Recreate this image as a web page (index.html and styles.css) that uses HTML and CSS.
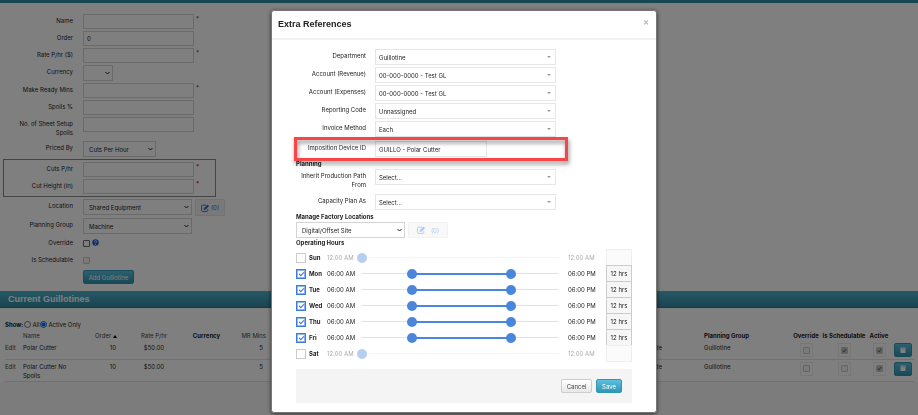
FILE: index.html
```
<!DOCTYPE html>
<html lang="en">

<head>
    <meta charset="UTF-8">
    <meta name="viewport" content="width=device-width, initial-scale=1.0">
    <title>Guillotines</title>
    <link rel="stylesheet" href="styles.css">
</head>

<body>
    <div class="page">
        <div class="topbar"></div>
        <form class="machine">
            <div class="row">
                <label for="name">Name</label>
                <input type="text" id="name"><span class="req">*</span>
            </div>
            <div class="row">
                <label for="order">Order</label>
                <input type="text" id="order" value="0">
            </div>
            <div class="row">
                <label for="rate">Rate P/hr ($)</label>
                <input type="text" id="rate"><span class="req">*</span>
            </div>
            <div class="row">
                <label for="currency">Currency</label>
                <select id="currency" class="w-xs"><option></option></select>
            </div>
            <div class="row">
                <label for="ready">Make Ready Mins</label>
                <input type="text" id="ready"><span class="req">*</span>
            </div>
            <div class="row">
                <label for="spoils">Spoils %</label>
                <input type="text" id="spoils">
            </div>
            <div class="row tall">
                <label for="setup">No. of Sheet Setup Spoils</label>
                <input type="text" id="setup">
            </div>
            <div class="row">
                <label for="priced">Priced By</label>
                <select id="priced" class="w-sm"><option>Cuts Per Hour</option></select>
            </div>
            <div class="cuts">
                <div class="row">
                    <label for="cuts">Cuts P/hr</label>
                    <input type="text" id="cuts"><span class="req red">*</span>
                </div>
                <div class="row">
                    <label for="height">Cut Height (in)</label>
                    <input type="text" id="height"><span class="req red">*</span>
                </div>
            </div>
            <div class="row">
                <label for="location">Location</label>
                <select id="location" class="w-md"><option>Shared Equipment</option></select>
                <button type="button" class="edit">
                    <svg viewBox="0 0 16 14"><path d="M12 8.5v3a1.5 1.5 0 0 1-1.500 1.500h-8A1.500 1.500 0 0 1 1 11.500v-8A1.500 1.500 0 0 1 2.500 2H9" fill="none" stroke="currentColor" stroke-width="1.600"/><path d="M5 10V7.500L11.500 1 14.500 3.500 7.800 10z" fill="currentColor"/></svg>(0)
                </button>
            </div>
            <div class="row">
                <label for="group">Planning Group</label>
                <select id="group" class="w-md"><option>Machine</option></select>
            </div>
            <div class="row">
                <label for="override">Override</label>
                <input type="checkbox" id="override">
                <svg class="help" viewBox="0 0 14 14"><circle cx="7" cy="7" r="6.500" fill="#2a62d0"/><path d="M4.800 5.200C4.800 2.400 9.400 2.600 9.200 5.200 9.100 6.600 7 6.600 7 8.500M7 9.800v1.600" fill="none" stroke="#fff" stroke-width="1.700"/></svg>
            </div>
            <div class="row">
                <label for="sched">Is Schedulable</label>
                <input type="checkbox" id="sched" disabled>
            </div>
            <button type="button" class="btn add">Add Guillotine</button>
        </form>

        <h2 class="bar">Current Guillotines</h2>
        <div class="list">
            <div class="show">
                <b>Show:</b>
                <input type="radio" name="show" id="all"><label for="all">All</label>
                <input type="radio" name="show" id="active" checked><label for="active">Active Only</label>
            </div>
            <table>
                <colgroup>
                    <col class="c-edit"><col class="c-name"><col class="c-order"><col class="c-rate"><col class="c-cur"><col class="c-mins"><col><col class="c-group"><col class="c-over"><col class="c-sched"><col class="c-act"><col class="c-btn">
                </colgroup>
                <thead>
                    <tr>
                        <th></th>
                        <th class="sort">Name</th>
                        <th class="sort">Order <i class="up"></i></th>
                        <th class="sort mid">Rate P/hr</th>
                        <th class="mid">Currency</th>
                        <th class="sort num">MR Mins</th>
                        <th></th>
                        <th>Planning Group</th>
                        <th class="mid">Override</th>
                        <th class="mid">Is Schedulable</th>
                        <th class="mid">Active</th>
                        <th></th>
                    </tr>
                </thead>
                <tbody>
                    <tr>
                        <td><a href="#">Edit</a></td>
                        <td>Polar Cutter</td>
                        <td class="ord">10</td>
                        <td class="mid">$50.00</td>
                        <td></td>
                        <td class="mins">5</td>
                        <td class="place">Digital/Offset Site</td>
                        <td>Guillotine</td>
                        <td class="mid"><span class="tick"><input type="checkbox" aria-label="Override" disabled></span></td>
                        <td class="mid"><span class="tick"><input type="checkbox" aria-label="Is Schedulable" checked disabled></span></td>
                        <td class="mid"><span class="tick"><input type="checkbox" aria-label="Active" checked disabled></span></td>
                        <td class="num"><button type="button" class="btn book" aria-label="Extra references"><svg viewBox="0 0 12 14"><path d="M2 1h9v11H2a1 1 0 0 1-1-1V2a1 1 0 0 1 1-1z" fill="#fff"/><path d="M3 3.500h7" stroke="#6ab" stroke-width="1"/></svg></button></td>
                    </tr>
                    <tr>
                        <td><a href="#">Edit</a></td>
                        <td class="wrap">Polar Cutter No Spoils</td>
                        <td class="ord">10</td>
                        <td class="mid">$50.00</td>
                        <td></td>
                        <td class="mins">5</td>
                        <td class="place">Digital/Offset Site</td>
                        <td>Guillotine</td>
                        <td class="mid"><span class="tick"><input type="checkbox" aria-label="Override" disabled></span></td>
                        <td class="mid"><span class="tick"><input type="checkbox" aria-label="Is Schedulable" disabled></span></td>
                        <td class="mid"><span class="tick"><input type="checkbox" aria-label="Active" checked disabled></span></td>
                        <td class="num"><button type="button" class="btn book" aria-label="Extra references"><svg viewBox="0 0 12 14"><path d="M2 1h9v11H2a1 1 0 0 1-1-1V2a1 1 0 0 1 1-1z" fill="#fff"/><path d="M3 3.500h7" stroke="#6ab" stroke-width="1"/></svg></button></td>
                    </tr>
                </tbody>
            </table>
        </div>
    </div>

    <div class="backdrop">
        <div class="modal" role="dialog" aria-labelledby="title">
            <div class="modal-header">
                <h3 id="title">Extra References</h3>
                <button type="button" class="close" aria-label="Close">×</button>
            </div>
            <form class="modal-body">
                <div class="row">
                    <label for="department">Department</label>
                    <select id="department"><option>Guillotine</option></select>
                </div>
                <div class="row">
                    <label for="revenue">Account (Revenue)</label>
                    <select id="revenue"><option>00-000-0000 - Test GL</option></select>
                </div>
                <div class="row">
                    <label for="expenses">Account (Expenses)</label>
                    <select id="expenses"><option>00-000-0000 - Test GL</option></select>
                </div>
                <div class="row">
                    <label for="reporting">Reporting Code</label>
                    <select id="reporting"><option>Unnassigned</option></select>
                </div>
                <div class="row">
                    <label for="invoice">Invoice Method</label>
                    <select id="invoice"><option>Each</option></select>
                </div>
                <div class="row marked">
                    <label for="device">Imposition Device ID</label>
                    <input type="text" id="device" value="GUILLO - Polar Cutter">
                </div>
                <h4>Planning</h4>
                <div class="row tall">
                    <label for="inherit">Inherit Production Path From</label>
                    <select id="inherit"><option>Select...</option></select>
                </div>
                <div class="row">
                    <label for="capacity">Capacity Plan As</label>
                    <select id="capacity"><option>Select...</option></select>
                </div>
                <h4><label for="factory">Manage Factory Locations</label></h4>
                <div class="factory">
                    <select id="factory"><option>Digital/Offset Site</option></select>
                    <button type="button" class="edit" disabled>
                        <svg viewBox="0 0 16 14"><path d="M12 8.500v3a1.500 1.500 0 0 1-1.500 1.500h-8A1.500 1.500 0 0 1 1 11.500v-8A1.500 1.500 0 0 1 2.500 2H9" fill="none" stroke="currentColor" stroke-width="1.600"/><path d="M5 10V7.500L11.500 1 14.500 3.500 7.800 10z" fill="currentColor"/></svg>(0)
                    </button>
                </div>
                <h4>Operating Hours</h4>
                <div class="hours" id="hours"></div>
                <div class="modal-footer">
                    <button type="button" class="btn cancel">Cancel</button>
                    <button type="button" class="btn save">Save</button>
                </div>
            </form>
        </div>
    </div>
    <script src="hours.js"></script>
</body>

</html>
```
FILE: styles.css
```
* {
    box-sizing: border-box;
    margin: 0;
    padding: 0;
}

body {
    font-family: Inter, "Liberation Sans", sans-serif;
    font-size: 6px;
    line-height: 9px;
    color: #222;
    background-color: #f9f9f9;
}

input,
select,
button {
    font: inherit;
    color: inherit;
}

a {
    color: #444;
    text-decoration: none;
}

.page {
    min-height: 100vh;
}

.topbar {
    height: 3px;
    background-color: #2f8da6;
}

/* left form */
.machine {
    padding: 11px 0 7px;
    background-color: #fff;
}

.row {
    display: flex;
    align-items: flex-start;
    margin-bottom: 2px;
}

.row label {
    flex: none;
    width: 73px;
    margin-right: 10px;
    padding: 2px 0 0 10px;
    text-align: right;
}

.machine .row {
    min-height: 15px;
}

.machine .tall {
    min-height: 22px;
}

.machine input[type="text"] {
    width: 111px;
    height: 15px;
    padding: 0 3px;
    border: 1px solid #d4d4d4;
    background-color: #fff;
}

.machine select,
.factory select {
    height: 16px;
    padding: 0 14px 0 5px;
    border: 1px solid #d4d4d4;
    appearance: none;
    background: #fff url("data:image/svg+xml,%3Csvg xmlns='http://www.w3.org/2000/svg' viewBox='0 0 10 8'%3E%3Cpath d='M1 2l4 4 4-4' fill='none' stroke='%23222' stroke-width='2'/%3E%3C/svg%3E") no-repeat right 2px center / 5px 4px;
}

.machine .w-xs {
    width: 30px;
}

.machine .w-sm {
    width: 73px;
}

.machine .w-md {
    width: 109px;
}

.req {
    margin-left: 2px;
    color: #333;
}

.req.red {
    font-weight: bold;
    color: #ff1030;
}

.cuts {
    width: 213px;
    margin: 0 0 2px 3px;
    padding: 2px 0;
    border: 1px solid #888;
}

.cuts .row label {
    width: 69px;
}

.cuts .row:last-child {
    margin-bottom: 0;
}

.edit {
    display: flex;
    align-items: center;
    justify-content: center;
    gap: 1px;
    width: 30px;
    height: 17px;
    margin-left: 3px;
    border: 1px solid #e4e4e4;
    border-radius: 1px;
    background-color: #f2f2f2;
    color: #2f6fd0;
}

.edit svg {
    width: 9px;
    height: 8px;
}

input[type="checkbox"],
input[type="radio"] {
    flex: none;
    width: 7px;
    height: 7px;
}

/* small square tick boxes */
.machine input[type="checkbox"],
.tick input {
    border: 1px solid #666;
    border-radius: 1px;
    appearance: none;
    background-color: #fff;
}

.machine input[type="checkbox"] {
    margin-top: 4px;
}

.machine input[type="checkbox"]:disabled,
.tick input {
    border-color: #c8c8c8;
    background-color: #f4f4f4;
}

.tick input:checked {
    background: #c0c0c0 url("data:image/svg+xml,%3Csvg xmlns='http://www.w3.org/2000/svg' viewBox='0 0 10 10'%3E%3Cpath d='M2 5l2 3 4-6' fill='none' stroke='%23666' stroke-width='2'/%3E%3C/svg%3E") no-repeat center / 5px;
}

.help {
    width: 7px;
    height: 7px;
    margin: 3px 0 0 2px;
}

.btn {
    height: 14px;
    border: 1px solid #2f96b4;
    border-radius: 2px;
    background: linear-gradient(#5bc0de, #2f96b4);
    color: #fff;
}

.add {
    display: block;
    width: 51px;
    margin-left: 83px;
}

/* list */
.bar {
    height: 17px;
    padding-left: 8px;
    font-family: "Liberation Sans", sans-serif;
    font-size: 9px;
    line-height: 16px;
    color: #fff;
    background: linear-gradient(#4db2cc, #33899f);
    border-bottom: 1px solid #2b7a8e;
}

.list {
    padding: 11px 4px 0 5px;
    background-color: #fff;
}

.show {
    display: flex;
    align-items: center;
    height: 11px;
}

.show input {
    margin: 0 1px;
}

table {
    width: 100%;
    table-layout: fixed;
    border-collapse: collapse;
}

.c-edit {
    width: 18px;
}

.c-name {
    width: 72px;
}

.c-order {
    width: 34px;
}

.c-rate {
    width: 50px;
}

.c-cur {
    width: 55px;
}

.c-mins {
    width: 32px;
}

.c-group {
    width: 88px;
}

.c-over {
    width: 28px;
}

.c-sched {
    width: 48px;
}

.c-act {
    width: 22px;
}

.c-btn {
    width: 24px;
}

th {
    height: 11px;
    text-align: left;
    white-space: nowrap;
}

.sort {
    font-weight: normal;
    color: #444;
}

td {
    height: 18px;
    padding: 2px 0 1px;
    vertical-align: top;
    border-bottom: 1px solid #e0e0e0;
}

.mid {
    text-align: center;
}

.num {
    text-align: right;
}

td.num {
    padding-right: 2px;
}

.ord {
    padding-right: 13px;
    text-align: right;
}

.mins {
    padding-right: 3px;
    text-align: right;
}

.place {
    padding-right: 42px;
    text-align: right;
}

.wrap {
    padding-right: 20px;
}

.up {
    display: inline-block;
    border: 2px solid transparent;
    border-top: 0;
    border-bottom: 3px solid #000;
}

.tick {
    display: inline-flex;
    align-items: center;
    justify-content: center;
    width: 13px;
    height: 14px;
    border: 1px solid #eee;
}

.book {
    display: inline-flex;
    align-items: center;
    justify-content: center;
    width: 18px;
}

.book svg {
    width: 6px;
    height: 7px;
}

/* dialog */
.backdrop {
    position: fixed;
    inset: 0;
    display: flex;
    justify-content: center;
    align-items: flex-start;
    padding: 10px 0 0 10px;
    background-color: rgba(0, 0, 0, .5);
}

.modal {
    width: 386px;
    border: 1px solid #777;
    border-radius: 3px;
    background-color: #fff;
    box-shadow: 0 1px 4px rgba(0, 0, 0, .6);
}

.modal-header {
    display: flex;
    justify-content: space-between;
    height: 29px;
    padding: 4px 7px 4px 6px;
    border-bottom: 2px solid #f3f3f3;
}

h3 {
    font-family: "Liberation Sans", sans-serif;
    font-size: 9px;
    line-height: 18px;
    color: #222;
}

.close {
    height: 12px;
    border: 0;
    background: none;
    font-size: 9px;
    font-weight: bold;
    color: #bbb;
}

.modal-body {
    padding: 9px 24px;
}

.modal-body .row {
    min-height: 16px;
}

.modal-body .row label {
    width: 70px;
    margin-right: 9px;
    padding-left: 0;
}

.modal-body .row select,
.modal-body .row input {
    height: 16px;
    padding: 0 3px;
    border: 1px solid #e6e6e6;
    background-color: #fff;
}

.modal-body .row select {
    width: 181px;
    appearance: none;
    background: #fff url("data:image/svg+xml,%3Csvg xmlns='http://www.w3.org/2000/svg' viewBox='0 0 8 4'%3E%3Cpath d='M0 0h8L4 4z' fill='%23999'/%3E%3C/svg%3E") no-repeat right 4px center / 4px 2px;
}

.modal-body .row input {
    width: 112px;
}

.modal-body .tall {
    min-height: 23px;
}

.modal-body .marked {
    position: relative;
    margin-top: 4px;
}

/* red frame round the device row */
.marked::after {
    content: "";
    position: absolute;
    inset: -4px 64px -4px -2px;
    border: 3px solid #f94545;
    filter: drop-shadow(1px 3px 2px rgba(0, 0, 0, .45));
    pointer-events: none;
}

h4 {
    font-size: 6px;
    line-height: 10px;
}

.factory {
    display: flex;
    height: 16px;
}

.factory select {
    width: 109px;
}

.factory .edit {
    gap: 5px;
    width: 40px;
    height: 16px;
    border-color: #f2f2f2;
    background-color: #f8f8f8;
    color: #a9c8ee;
}

.hours {
    margin: 1px 0 8px;
}

.day {
    display: grid;
    grid-template-columns: 13px 18px 34px 1fr 47px 26px;
    align-items: center;
    height: 16px;
}

.day input[type="checkbox"] {
    display: flex;
    align-items: center;
    justify-content: center;
    width: 10px;
    height: 10px;
    border: 1px solid #ccc;
    appearance: none;
}

.day input[type="checkbox"]:checked {
    border-color: #3b7ddd;
    outline: 1px solid #8ab4ef;
    outline-offset: -2px;
}

.day input[type="checkbox"]:checked::before {
    content: "";
    width: 4px;
    height: 2px;
    border: solid #2f6fd6;
    border-width: 0 0 1px 1px;
    transform: rotate(-45deg);
}

.day label {
    font-weight: bold;
}

.day .end {
    padding-left: 9px;
}

.slider {
    position: relative;
    height: 10px;
    background: linear-gradient(#e2e2e2, #e2e2e2) no-repeat center / 100% 1px;
}

.fill {
    position: absolute;
    top: 4px;
    height: 2px;
    background-color: #4a87dc;
}

/* two ranges share one track, only the thumbs take the mouse */
.slider input {
    position: absolute;
    top: 0;
    left: -4px;
    width: calc(100% + 10px);
    height: 10px;
    appearance: none;
    background: none;
    pointer-events: none;
}

.slider input::-webkit-slider-thumb {
    width: 10px;
    height: 10px;
    border-radius: 50%;
    appearance: none;
    background-color: #4a87dc;
    pointer-events: auto;
}

.total {
    height: 17px;
    border: 1px solid #ccc;
    background-color: #f6f6f6;
    line-height: 15px;
    text-align: center;
}

.off .time,
.off .slider {
    opacity: .4;
}

.off .total {
    border-color: #eee;
    background-color: #fbfbfb;
}

.modal-footer {
    display: flex;
    align-items: center;
    justify-content: flex-end;
    gap: 4px;
    height: 34px;
    padding-right: 10px;
    border-radius: 2px;
    background-color: #f4f4f4;
}

.cancel {
    width: 31px;
    border-color: #ccc;
    background: linear-gradient(#fff, #e8e8e8);
    color: #444;
}

.save {
    width: 26px;
}
```
FILE: hours.js
```
var days = [
    { name: "Sun" },
    { name: "Mon", from: 6, to: 18 },
    { name: "Tue", from: 6, to: 18 },
    { name: "Wed", from: 6, to: 18 },
    { name: "Thu", from: 6, to: 18 },
    { name: "Fri", from: 6, to: 18 },
    { name: "Sat" }
];

function clock(h) {
    var n = h % 12 || 12;
    return (n < 10 ? "0" : "") + n + ":00 " + (h < 12 ? "AM" : "PM");
}

var html = "";
days.forEach(function (d) {
    var on = d.to > 0;
    var from = d.from || 0;
    var to = d.to || 0;
    var id = d.name.toLowerCase();
    html += '<div class="day' + (on ? "" : " off") + '">' +
        '<input type="checkbox" id="' + id + '"' + (on ? " checked" : "") + '>' +
        '<label for="' + id + '">' + d.name + '</label>' +
        '<span class="time">' + clock(from) + '</span>' +
        '<div class="slider">';
    if (on) {
        html += '<span class="fill" style="left:' + from / 24 * 100 + '%;width:' + (to - from) / 24 * 100 + '%"></span>';
    }
    html += '<input type="range" max="24" value="' + from + '" aria-label="' + d.name + ' start"' + (on ? "" : " disabled") + '>';
    if (on) {
        html += '<input type="range" max="24" value="' + to + '" aria-label="' + d.name + ' end">';
    }
    html += '</div>' +
        '<span class="time end">' + clock(to) + '</span>' +
        '<output class="total">' + (on ? to - from + " hrs" : "") + '</output>' +
        '</div>';
});
document.getElementById("hours").innerHTML = html;
```
